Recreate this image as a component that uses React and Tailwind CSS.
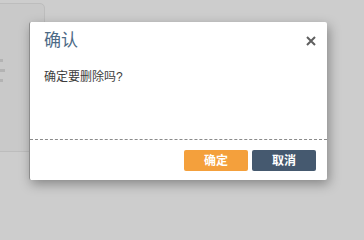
import React from 'react';

const font = { fontFamily: '"Liberation Sans", "Noto Sans CJK SC", sans-serif' };

export default function App() {
  return (
    <div className="relative w-full min-w-[364px] h-screen min-h-[214px] overflow-hidden bg-[#cdcdcd]" style={font}>
      {/* page behind the overlay */}
      <div className="absolute left-[-6px] top-[3px] w-[51px] h-[149px] rounded-[5px] border border-[#bdbdbd] bg-[#c9c9c9]">
        <div className="absolute left-[4px] top-[55px] w-[4px] h-[3px] bg-[#b3b3b3]" />
        <div className="absolute left-[4px] top-[65px] w-[6px] h-[3px] bg-[#b3b3b3]" />
        <div className="absolute left-[4px] top-[75px] w-[4px] h-[3px] bg-[#b3b3b3]" />
      </div>

      {/* dialog */}
      <div className="absolute left-[29px] top-[22px] w-[298px] h-[158px] bg-white rounded-[2px] border-l border-[#8c8c8c] shadow-[2px_4px_12px_rgba(0,0,0,0.35)] flex flex-col">
        <div className="flex items-center justify-between pl-[14px] pr-[10px] h-[36px] pt-[2px]">
          <span className="text-[17px] text-[#4d6a86]">确认</span>
          <svg width="10" height="10" viewBox="0 0 10 10" className="mr-[1px]">
            <path d="M1 1L9 9M9 1L1 9" stroke="#5f5f5f" strokeWidth="2" />
          </svg>
        </div>
        <div className="pl-[14px] pt-[10px] text-[12px] text-[#3d3d3d]">确定要删除吗?</div>
        <div className="mt-auto border-t border-dashed border-[#8a8a8a] flex justify-end gap-[4px] pr-[11px] pt-[10px] pb-[9px]">
          <button className="w-[64px] h-[21px] rounded-[2px] bg-[#f4a03c] text-white text-[12px] font-bold">确定</button>
          <button className="w-[64px] h-[21px] rounded-[2px] bg-[#45596f] text-white text-[12px] font-bold">取消</button>
        </div>
      </div>
    </div>
  );
}
